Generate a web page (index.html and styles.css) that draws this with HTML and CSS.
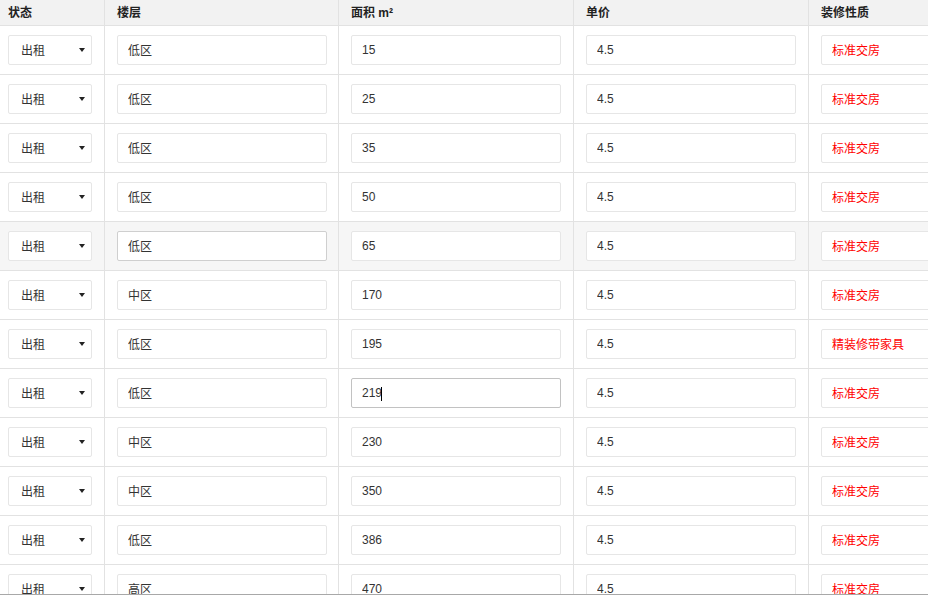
FILE: index.html
```html
<!DOCTYPE html>
<html lang="zh-CN">
<head>
<meta charset="UTF-8">
<meta name="viewport" content="width=device-width, initial-scale=1.0">
<title>房源列表</title>
<link rel="stylesheet" href="styles.css">
</head>
<body>
<div class="table-wrap">
    <table class="house-table">
        <thead>
            <tr>
                <th class="col-status">状态</th>
                <th class="col-floor">楼层</th>
                <th>面积 m²</th>
                <th>单价</th>
                <th>装修性质</th>
            </tr>
        </thead>
        <tbody>
            <tr>
                <td class="col-status"><div class="select-wrap"><select><option>出租</option><option>出售</option></select></div></td>
                <td class="col-floor"><input type="text" class="cn" value="低区"></td>
                <td><input type="text" value="15"></td>
                <td><input type="text" value="4.5"></td>
                <td><input type="text" class="cn red" value="标准交房"></td>
            </tr>
            <tr>
                <td class="col-status"><div class="select-wrap"><select><option>出租</option><option>出售</option></select></div></td>
                <td class="col-floor"><input type="text" class="cn" value="低区"></td>
                <td><input type="text" value="25"></td>
                <td><input type="text" value="4.5"></td>
                <td><input type="text" class="cn red" value="标准交房"></td>
            </tr>
            <tr>
                <td class="col-status"><div class="select-wrap"><select><option>出租</option><option>出售</option></select></div></td>
                <td class="col-floor"><input type="text" class="cn" value="低区"></td>
                <td><input type="text" value="35"></td>
                <td><input type="text" value="4.5"></td>
                <td><input type="text" class="cn red" value="标准交房"></td>
            </tr>
            <tr>
                <td class="col-status"><div class="select-wrap"><select><option>出租</option><option>出售</option></select></div></td>
                <td class="col-floor"><input type="text" class="cn" value="低区"></td>
                <td><input type="text" value="50"></td>
                <td><input type="text" value="4.5"></td>
                <td><input type="text" class="cn red" value="标准交房"></td>
            </tr>
            <tr class="hover">
                <td class="col-status"><div class="select-wrap"><select><option>出租</option><option>出售</option></select></div></td>
                <td class="col-floor"><input type="text" class="cn hover-input" value="低区"></td>
                <td><input type="text" value="65"></td>
                <td><input type="text" value="4.5"></td>
                <td><input type="text" class="cn red" value="标准交房"></td>
            </tr>
            <tr>
                <td class="col-status"><div class="select-wrap"><select><option>出租</option><option>出售</option></select></div></td>
                <td class="col-floor"><input type="text" class="cn" value="中区"></td>
                <td><input type="text" value="170"></td>
                <td><input type="text" value="4.5"></td>
                <td><input type="text" class="cn red" value="标准交房"></td>
            </tr>
            <tr>
                <td class="col-status"><div class="select-wrap"><select><option>出租</option><option>出售</option></select></div></td>
                <td class="col-floor"><input type="text" class="cn" value="低区"></td>
                <td><input type="text" value="195"></td>
                <td><input type="text" value="4.5"></td>
                <td><input type="text" class="cn red" value="精装修带家具"></td>
            </tr>
            <tr>
                <td class="col-status"><div class="select-wrap"><select><option>出租</option><option>出售</option></select></div></td>
                <td class="col-floor"><input type="text" class="cn" value="低区"></td>
                <td>
                    <div class="caret-wrap">
                        <input type="text" class="focus-input" value="219">
                        <span class="caret"></span>
                    </div>
                </td>
                <td><input type="text" value="4.5"></td>
                <td><input type="text" class="cn red" value="标准交房"></td>
            </tr>
            <tr>
                <td class="col-status"><div class="select-wrap"><select><option>出租</option><option>出售</option></select></div></td>
                <td class="col-floor"><input type="text" class="cn" value="中区"></td>
                <td><input type="text" value="230"></td>
                <td><input type="text" value="4.5"></td>
                <td><input type="text" class="cn red" value="标准交房"></td>
            </tr>
            <tr>
                <td class="col-status"><div class="select-wrap"><select><option>出租</option><option>出售</option></select></div></td>
                <td class="col-floor"><input type="text" class="cn" value="中区"></td>
                <td><input type="text" value="350"></td>
                <td><input type="text" value="4.5"></td>
                <td><input type="text" class="cn red" value="标准交房"></td>
            </tr>
            <tr>
                <td class="col-status"><div class="select-wrap"><select><option>出租</option><option>出售</option></select></div></td>
                <td class="col-floor"><input type="text" class="cn" value="低区"></td>
                <td><input type="text" value="386"></td>
                <td><input type="text" value="4.5"></td>
                <td><input type="text" class="cn red" value="标准交房"></td>
            </tr>
            <tr>
                <td class="col-status"><div class="select-wrap"><select><option>出租</option><option>出售</option></select></div></td>
                <td class="col-floor"><input type="text" class="cn" value="高区"></td>
                <td><input type="text" value="470"></td>
                <td><input type="text" value="4.5"></td>
                <td><input type="text" class="cn red" value="标准交房"></td>
            </tr>
            <tr>
                <td class="col-status"><div class="select-wrap"><select><option>出租</option><option>出售</option></select></div></td>
                <td class="col-floor"><input type="text" class="cn" value="高区"></td>
                <td><input type="text" value="520"></td>
                <td><input type="text" value="4.5"></td>
                <td><input type="text" class="cn red" value="标准交房"></td>
            </tr>
        </tbody>
    </table>
</div>
</body>
</html>
```

FILE: styles.css
```css
* {
    box-sizing: border-box;
}

body {
    margin: 0;
    background-color: #fff;
    font-family: "Liberation Sans", "Noto Sans CJK SC", sans-serif;
    font-size: 12px;
    color: #333;
    overflow: hidden;
}

.table-wrap {
    height: 595px;
    overflow: hidden;
    border-bottom: 1px solid #a8a8a8;
}

.house-table {
    table-layout: fixed;
    width: 1044px;
    border-collapse: separate;
    border-spacing: 0;
}

.house-table th,
.house-table td {
    width: 235px;
    padding: 0 12px;
    border-right: 1px solid #e2e2e2;
    border-bottom: 1px solid #e2e2e2;
    text-align: left;
}

.house-table th.col-status,
.house-table td.col-status {
    width: 105px;
    padding-left: 8px;
    padding-right: 12px;
}

.house-table th.col-floor,
.house-table td.col-floor {
    width: 234px;
    padding-right: 11px;
}

.house-table th {
    height: 26px;
    background-color: #f2f2f2;
    font-weight: bold;
    color: #222;
    line-height: 24px;
}

.house-table td {
    height: 49px;
    padding-top: 9px;
    padding-bottom: 9px;
}

.house-table tr.hover td {
    background-color: #f6f6f6;
}

.house-table input {
    display: block;
    width: 100%;
    height: 30px;
    padding: 0 10px;
    border: 1px solid #e6e6e6;
    border-radius: 2px;
    background-color: #fff;
    font-family: inherit;
    font-size: 12px;
    line-height: 16px;
    color: #333;
    outline: none;
}

.house-table input.cn {
    padding-bottom: 2px;
}

.house-table input.red {
    color: #f00;
}

.house-table input.hover-input {
    border-color: #cfcfcf;
}

.house-table input.focus-input,
.house-table input:focus {
    border-color: #c2c2c2;
}

.caret-wrap {
    position: relative;
}

.caret {
    position: absolute;
    top: 9px;
    left: 30px;
    width: 1px;
    height: 14px;
    background-color: #000;
}

.select-wrap {
    position: relative;
    width: 84px;
}

.select-wrap select {
    display: block;
    width: 100%;
    height: 30px;
    padding: 1px 12px 0;
    border: 1px solid #e6e6e6;
    border-radius: 2px;
    background-color: #fff;
    font-family: inherit;
    font-size: 12px;
    line-height: 16px;
    color: #333;
    -webkit-appearance: none;
    appearance: none;
    outline: none;
}

.select-wrap::after {
    content: "";
    position: absolute;
    top: 13px;
    right: 7px;
    border-left: 3px solid transparent;
    border-right: 3px solid transparent;
    border-top: 4px solid #222;
}
```
